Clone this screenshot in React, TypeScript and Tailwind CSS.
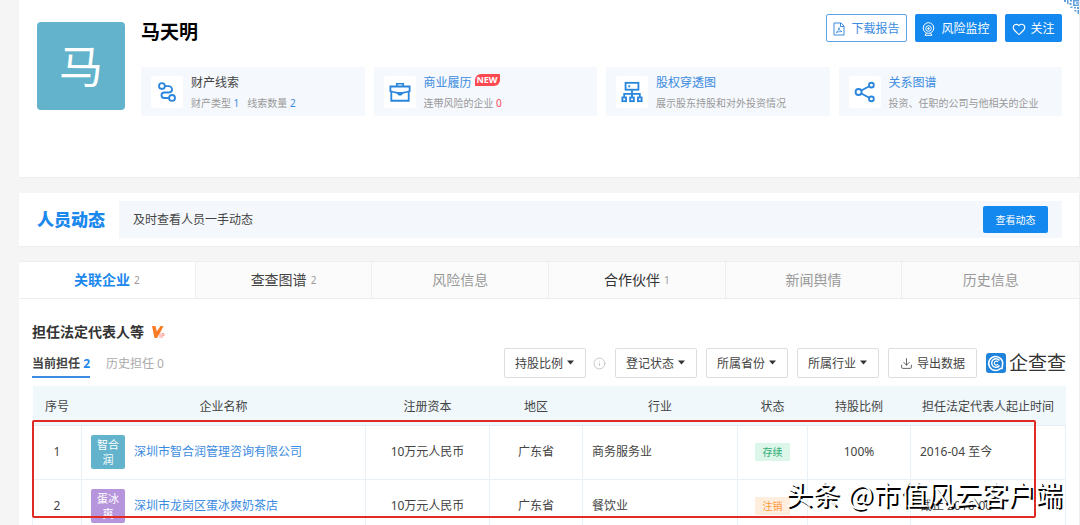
import React from 'react';
import { Download, Heart, Info } from 'lucide-react';

interface Feature {
  title: string;
  icon: React.ReactNode;
  sub: React.ReactNode;
  isNew?: boolean;
  plain?: boolean;
}

interface Company {
  short: [string, string];
  color: string;
  name: string;
  capital: string;
  region: string;
  industry: string;
  status: string;
  statusColor: string;
  share: string;
  period: string;
}

const iconProps = {
  width: 24,
  height: 24,
  viewBox: '0 0 24 24',
  fill: 'none',
  stroke: '#2a86dc',
  strokeWidth: 2,
};

const features: Feature[] = [
  {
    title: '财产线索',
    plain: true,
    icon: (
      <svg {...iconProps}>
        <circle cx="6.5" cy="5.5" r="3.2" />
        <circle cx="17.5" cy="18.5" r="3.2" />
        <path d="M9.700 5.500h4a3.800 3.800 0 0 1 3.800 3.800c0 2-1.500 3.200-3.500 3.200H9a3 3 0 0 0 0 6h5.300" />
      </svg>
    ),
    sub: (
      <>
        财产类型 <span className="text-[#3b8be0]">1</span>
        <span className="ml-2">线索数量</span> <span className="text-[#3b8be0]">2</span>
      </>
    ),
  },
  {
    title: '商业履历',
    isNew: true,
    icon: (
      <svg {...iconProps}>
        <path d="M1.500 6h21v5l-1 .5V21.500h-19V11.500l-1-.5z" />
        <path d="M8.500 6V3h7v3M2.500 11.500l6.500 1.500h6l6.500-1.500" strokeWidth="1.800" />
        <path d="M8.500 12.500c0 4.500 7 4.500 7 0z" fill="#2a86dc" stroke="none" />
      </svg>
    ),
    sub: (
      <>
        连带风险的企业 <span className="text-[#fd485e]">0</span>
      </>
    ),
  },
  {
    title: '股权穿透图',
    icon: (
      <svg {...iconProps}>
        <rect x="5" y="2" width="14" height="7.500" />
        <path d="M12 9.500V18M3.500 18v-4h17v4M8 5.700h2" />
        <rect x="1.500" y="18" width="4" height="4" />
        <rect x="10" y="18" width="4" height="4" />
        <rect x="18.500" y="18" width="4" height="4" />
      </svg>
    ),
    sub: '展示股东持股和对外投资情况',
  },
  {
    title: '关系图谱',
    icon: (
      <svg {...iconProps}>
        <circle cx="5" cy="12" r="3.300" />
        <circle cx="19" cy="4.500" r="2.600" />
        <circle cx="19" cy="19.500" r="2.600" />
        <path d="M8 10.400l8.600-4.600M8 13.600l8.600 4.600" />
      </svg>
    ),
    sub: '投资、任职的公司与他相关的企业',
  },
];

const tabs = [
  { label: '关联企业', count: '2', style: 'bg-white text-[#1b88ee] font-bold' },
  { label: '查查图谱', count: '2', style: 'bg-[#fbfbfb] text-[#444]' },
  { label: '风险信息', count: '', style: 'bg-[#fbfbfb] text-[#999]' },
  { label: '合作伙伴', count: '1', style: 'bg-[#fbfbfb] text-[#333]' },
  { label: '新闻舆情', count: '', style: 'bg-[#fbfbfb] text-[#999]' },
  { label: '历史信息', count: '', style: 'bg-[#fbfbfb] text-[#999]' },
];

const companies: Company[] = [
  {
    short: ['智合', '润'],
    color: 'bg-[#62b3cb]',
    name: '深圳市智合润管理咨询有限公司',
    capital: '10万元人民币',
    region: '广东省',
    industry: '商务服务业',
    status: '存续',
    statusColor: 'bg-[#dcf6ea] text-[#2fae75]',
    share: '100%',
    period: '2016-04 至今',
  },
  {
    short: ['蛋冰', '爽'],
    color: 'bg-[#b795dc]',
    name: '深圳市龙岗区蛋冰爽奶茶店',
    capital: '10万元人民币',
    region: '广东省',
    industry: '餐饮业',
    status: '注销',
    statusColor: 'bg-[#ffeedd] text-[#ff9a3c]',
    share: '',
    period: '截止 2016-06',
  },
];

const columns = [
  { label: '序号', width: 'w-[49px]' },
  { label: '企业名称', width: '' },
  { label: '注册资本', width: 'w-[124px]' },
  { label: '地区', width: 'w-[93px]' },
  { label: '行业', width: 'w-[155px]' },
  { label: '状态', width: 'w-[70px]' },
  { label: '持股比例', width: 'w-[103px]' },
  { label: '担任法定代表人起止时间', width: 'w-[155px]' },
];

const FilterSelect: React.FC<{ label: string }> = ({ label }) => (
  <div className="relative">
    <select
      aria-label={label}
      className="h-[30px] w-[82px] appearance-none rounded-xs border border-[#dedede] bg-white pt-px pl-[10px] text-xs text-[#444]">
      <option>{label}</option>
    </select>
    <svg
      className="pointer-events-none absolute top-3 right-3"
      width="7"
      height="5"
      viewBox="0 0 7 5">
      <path d="M0 0.500h7L3.500 4.500z" fill="#333" />
    </svg>
  </div>
);

const Profile: React.FC = () => (
  <section className="relative flex h-[178px] gap-4 border-r border-b border-[#eee] bg-white pr-[17px] pl-[18px]">
    <div className="mt-[22px] flex size-[88px] shrink-0 items-center justify-center rounded-sm bg-[#62b3cb] text-[44px] text-white">
      马
    </div>
    <div className="min-w-0 flex-1 pt-[14px]">
      <div className="flex h-[53px] items-start justify-between">
        <h1 className="pt-1 text-[19px] leading-7 font-bold text-black">马天明</h1>
        <div className="flex gap-2 text-xs">
          <button className="flex h-7 w-[81px] items-center justify-center gap-1.5 rounded-xs border border-[#5ba4ea] bg-white pt-px text-[#3b8be0]">
            <svg width="12" height="14" viewBox="0 0 12 14" fill="none" stroke="currentColor">
              <path d="M1 1h7l3 3v9H1zM7.500 1v3.500H11" />
              <path d="M3 10.500c2-1 3-3 3-5 0 2 1 3.500 3 4-2 0-4 .3-6 1z" strokeWidth="0.800" />
            </svg>
            下载报告
          </button>
          <button className="flex h-7 w-[82px] items-center justify-center gap-1.5 rounded-xs bg-[#1388ee] pt-px text-white">
            <svg width="13" height="14" viewBox="0 0 13 14" fill="none" stroke="currentColor">
              <circle cx="6.500" cy="6" r="5.300" />
              <circle cx="6.500" cy="6.500" r="2.800" />
              <circle cx="6.500" cy="6.500" r="0.800" fill="currentColor" />
              <path d="M4.500 11l-1.500 2.300h7L8.500 11" />
            </svg>
            风险监控
          </button>
          <button className="flex h-7 w-[57px] items-center justify-center gap-1 rounded-xs bg-[#1388ee] pt-px text-white">
            <Heart size={14} />
            关注
          </button>
        </div>
      </div>
      <div className="grid grid-cols-4 gap-[9px]">
        {features.map((f) => (
          <a
            key={f.title}
            href="#"
            className="flex h-[49px] items-center gap-2 bg-[#f5f8fd] pl-[10px]">
            <span className="flex size-8 shrink-0 items-center justify-center rounded-xs bg-white *:size-[22px]">
              {f.icon}
            </span>
            <span className="min-w-0 pt-0.5 whitespace-nowrap">
              <span
                className={`flex h-5 items-center text-xs ${f.plain ? 'text-[#444]' : 'text-[#3b8be0]'}`}>
                {f.title}
                {f.isNew && (
                  <span className="mb-1.5 ml-[3px] rounded-tl-md rounded-br-md bg-[#fb4a52] px-0.5 text-[9px] leading-3 font-bold text-white">
                    NEW
                  </span>
                )}
              </span>
              <span className="block text-[10px] leading-5 text-[#999]">{f.sub}</span>
            </span>
          </a>
        ))}
      </div>
    </div>
    {/* corner of the scan-to-open code */}
    <svg className="absolute top-0 right-0" width="15" height="14" viewBox="0 0 15 14" fill="#5c9fdc">
      <path d="M0 0h2v2H0zM3 0h1.500v4H3zM6 0h2v1.500H6zM9 0h6v1.500h-4.500v3H15V6H9zM12 2.200h3v1.500h-3zM5.500 3h2v2h-2zM6.500 6.500h2V8h-2zM10 7h2v1.500h-2zM13 7h2v2h-2zM10.500 10h2v1.500h-2zM13.500 10H15v4h-1.500z" />
    </svg>
  </section>
);

const Activity: React.FC = () => (
  <section className="mt-[15px] flex h-[54px] items-center gap-[14px] border-r border-b border-[#eee] bg-white pr-[17px] pl-[18px]">
    <h2 className="text-[17px] font-black text-[#1b88ee]">人员动态</h2>
    <div className="flex h-[37px] flex-1 items-center justify-between bg-[#f4f8fd] pr-[14px] pl-[14px]">
      <p className="text-xs text-[#444]">及时查看人员一手动态</p>
      <button className="h-[27px] w-[65px] rounded-xs bg-[#1388ee] pt-px text-[10px] text-white">
        查看动态
      </button>
    </div>
  </section>
);

const CompanyTable: React.FC = () => (
  <div className="relative mt-2">
    <table className="w-full table-fixed border-collapse text-xs text-[#444]">
      <thead>
        <tr className="h-[39px] bg-[#f0f8fc]">
          {columns.map((c) => (
            <th
              key={c.label}
              className={`border-b border-[#e4eef6] pt-1 font-normal whitespace-nowrap ${c.width}`}>
              {c.label}
            </th>
          ))}
        </tr>
      </thead>
      <tbody>
        {companies.map((c, index) => (
          <tr
            key={c.name}
            className="h-[54px] text-center *:border *:border-[#e9f1f7]">
            <td>{index + 1}</td>
            <td>
              <div className="flex items-center gap-[9px] pl-[9px]">
                <span
                  className={`flex size-[34px] flex-col items-center justify-center rounded-xs text-[11px] leading-[15px] text-white ${c.color}`}>
                  <span>{c.short[0]}</span>
                  <span>{c.short[1]}</span>
                </span>
                <a href="#" className="text-[#3b8be0]">
                  {c.name}
                </a>
              </div>
            </td>
            <td>{c.capital}</td>
            <td>{c.region}</td>
            <td className="pl-[9px] text-left">{c.industry}</td>
            <td>
              <span
                className={`inline-block w-[35px] text-[10px] leading-[18px] ${c.statusColor}`}>
                {c.status}
              </span>
            </td>
            <td>{c.share}</td>
            <td className="pl-[9px] text-left">{c.period}</td>
          </tr>
        ))}
      </tbody>
    </table>
    {/* highlight frame over both rows */}
    <div className="pointer-events-none absolute top-[34px] right-[30px] left-0 h-[98px] rounded-xs border-2 border-[#e02a24]" />
    <div className="pointer-events-none absolute top-[90px] right-1 flex gap-2 font-['Noto_Sans_CJK_SC',sans-serif] text-[27px] leading-9 whitespace-nowrap text-white [text-shadow:2px_2px_0_#000]">
      <span>头条</span>
      <span>@市值风云客户端</span>
    </div>
  </div>
);

const Companies: React.FC = () => (
  <section className="mt-[14px] border-r border-[#eee] bg-white">
    <nav className="grid h-[38px] grid-cols-6 border-y border-[#eee]">
      {tabs.map((t) => (
        <a
          key={t.label}
          href="#"
          className={`flex items-center justify-center gap-1 border-r border-[#eee] text-sm last:border-r-0 ${t.style}`}>
          {t.label}
          {t.count && <span className="text-[10px] font-normal text-[#999]">{t.count}</span>}
        </a>
      ))}
    </nav>
    <div className="px-[13px]">
      <div className="flex h-[79px] items-end justify-between">
        <div>
          <h3 className="flex items-center gap-2 text-sm leading-5 font-bold text-[#333]">
            担任法定代表人等
            <svg width="14" height="13" viewBox="0 0 14 13">
              <path d="M0 0h3.500l1.300 5.500L8.500 0h3L9 5 5 12H2.500z" fill="#fb7a24" />
              <path d="M8 7v5M10 12V7.500h2v2.200h-2" fill="none" stroke="#fb9b8c" />
            </svg>
          </h3>
          <div className="mt-3 flex gap-4 text-xs">
            <a href="#" className="border-b-2 border-[#3b8be0] pb-0.5 leading-5 font-bold text-[#444]">
              当前担任 <span className="text-[#1b88ee]">2</span>
            </a>
            <a href="#" className="leading-5 text-[#aaa]">
              历史担任 0
            </a>
          </div>
        </div>
        <div className="flex items-center gap-[9px]">
          <div className="flex items-center gap-[7px]">
            <FilterSelect label="持股比例" />
            <Info size={13} strokeWidth={1.5} color="#bbb" />
          </div>
          <FilterSelect label="登记状态" />
          <FilterSelect label="所属省份" />
          <FilterSelect label="所属行业" />
          <button className="flex h-[30px] w-[89px] items-center justify-center gap-1 rounded-xs border border-[#dedede] bg-white pt-px text-xs text-[#444]">
            <Download size={13} strokeWidth={1.5} />
            导出数据
          </button>
          <div className="flex items-center gap-[3px] text-[19px] leading-7 text-[#333]">
            <svg width="20" height="20" viewBox="0 0 20 20" fill="none" stroke="#fff">
              <rect width="20" height="20" rx="3" fill="#1f83dc" stroke="none" />
              <path d="M14.800 15.200A7 7 0 1 1 16.500 12l-.5 3.500h-2" strokeWidth="1.500" />
              <path d="M13.500 7.500a4.300 4.300 0 1 0 0 5" strokeWidth="1.400" />
              <path d="M12 9a2 2 0 1 0 0 2.200" strokeWidth="1.200" />
            </svg>
            企查查
          </div>
        </div>
      </div>
      <CompanyTable />
    </div>
  </section>
);

const App: React.FC = () => {
  return (
    <main className="h-screen overflow-hidden bg-[#f5f5f5] pl-[19px] font-['Noto_Sans','Noto_Sans_CJK_SC',sans-serif]">
      <Profile />
      <Activity />
      <Companies />
    </main>
  );
};

export default App;
